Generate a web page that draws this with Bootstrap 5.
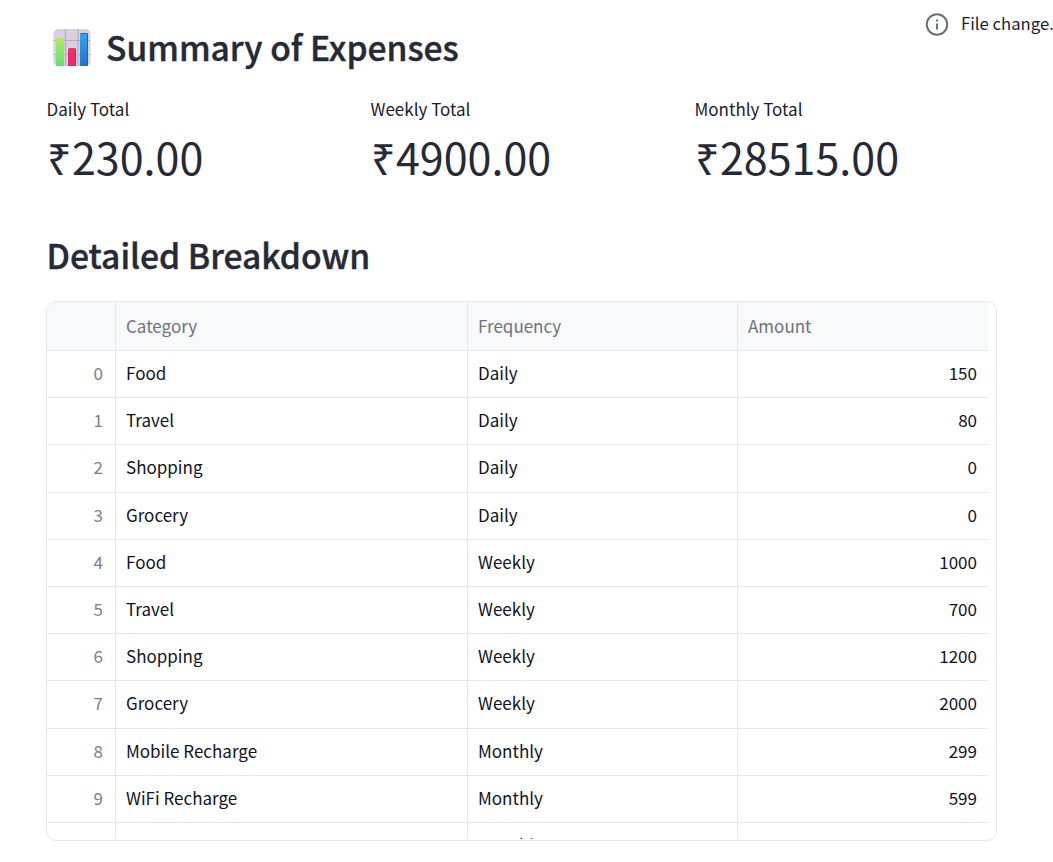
<!DOCTYPE html>
<html lang="en"><head><meta charset="utf-8"><title>Summary of Expenses</title>
<meta name="viewport" content="width=device-width, initial-scale=1">
<link href="https://cdn.jsdelivr.net/npm/bootstrap@5.3.0/dist/css/bootstrap.min.css" rel="stylesheet">
<style>
html,body{height:862px;overflow:hidden}
body{font-family:"Noto Sans CJK SC",sans-serif;color:#1a1c2e;font-size:17px;line-height:24px;background:#fff}
.page{padding:0 0 0 46px;height:862px}
.status{top:0;right:0;width:128px;height:47px;white-space:nowrap}
.status span{margin:-1px 0 0 12px;font-size:16.7px}
.title{padding:24px 0 0 6px;height:97px}
.title h1,.sect{font-size:33.6px;line-height:46px;font-weight:500;margin:0;color:#262a38;-webkit-text-stroke:.4px #262a38}
.title svg{margin:4px 14px 0 0}
.sect{margin:50px 0 23px .5px}
.metrics{height:85px;padding-left:.5px}
.metric-col{width:324px;flex:none}
.metric-num{font-size:43px;line-height:58px;margin:6px 0 0 .5px;color:#262a38}
.frame{border:1px solid #e6e7ea;border-radius:10px;height:540px;width:951px;overflow:hidden}
.clip{height:537px;overflow:hidden}
.sheet{display:block;width:941px}
.sheet thead,.sheet tbody{display:block}
.sheet tr{display:flex;height:47.2px}
.sheet thead tr{height:49px}
.sheet th,.sheet td{padding:0 10px;border:0 solid #e6e7ea;border-width:0 1px 1px 0;white-space:nowrap;display:flex;align-items:center}
.sheet th{background:#f8f9fb;color:#6f727d;font-weight:400}
.sheet td{color:#11131f;padding-bottom:2px}
.sheet tr>:nth-child(1){width:69px;color:#7c7f8a;justify-content:flex-end;padding-right:12px}
.sheet tr>:nth-child(2){width:352px}
.sheet tr>:nth-child(3){width:270px}
.sheet tr>:nth-child(4){width:250px;border-right-width:0}
.sheet td:nth-child(4){justify-content:flex-end;padding-right:11px}
</style></head><body>
<main class="page position-relative">
<div class="status position-absolute d-flex align-items-center"><svg class="flex-shrink-0" width="24" height="24" viewBox="0 0 24 24" fill="none" stroke="#6c6f7c" stroke-width="2"><circle cx="12" cy="12.5" r="10.2"/><path d="M12 11.5v6M12 7.5v2"/></svg><span>File change.</span></div>
<div class="title d-flex align-items-start">
<svg class="flex-shrink-0" width="40" height="40" viewBox="0 0 40 40">
<defs><linearGradient id="g" x2="0" y2="1"><stop stop-color="#b5ea5e"/><stop offset="1" stop-color="#62df7c"/></linearGradient><linearGradient id="r" x2="0" y2="1"><stop stop-color="#e03a62"/><stop offset="1" stop-color="#f0247c"/></linearGradient><linearGradient id="b" x2="0" y2="1"><stop stop-color="#38a4f0"/><stop offset="1" stop-color="#2272c8"/></linearGradient></defs>
<rect x="1.5" y="1" width="37" height="37" rx="5" fill="#d8d1df"/>
<path d="M13.5 1v37M26 1v37M1.5 12.5h37M1.5 26.5h37" stroke="#b5afbd" stroke-width="1.2"/>
<path d="M4 38V11.5q0-1.5 1.5-1.5h5q1.5 0 1.5 1.5V38z" fill="url(#g)"/>
<path d="M16 38V21.5q0-1.5 1.5-1.5h5q1.5 0 1.5 1.5V38z" fill="url(#r)"/>
<path d="M28 38V6.5q0-1.5 1.5-1.5h5q1.5 0 1.5 1.5V38z" fill="url(#b)"/>
<path d="M28.5 5.5h7" stroke="#1766a8"/><path d="M35.5 6v32" stroke="#1b65b5"/><path d="M23.5 21v17" stroke="#c82258"/>
</svg><h1>Summary of Expenses</h1></div>
<div class="metrics d-flex">
<div class="metric-col"><div>Daily Total</div><div class="metric-num">₹230.00</div></div>
<div class="metric-col"><div>Weekly Total</div><div class="metric-num">₹4900.00</div></div>
<div class="metric-col"><div>Monthly Total</div><div class="metric-num">₹28515.00</div></div></div>
<h2 class="sect">Detailed Breakdown</h2>
<div class="frame"><div class="clip"><table class="sheet">
<thead><tr><th></th><th>Category</th><th>Frequency</th><th>Amount</th></tr></thead><tbody>
<tr><td>0</td><td>Food</td><td>Daily</td><td>150</td></tr>
<tr><td>1</td><td>Travel</td><td>Daily</td><td>80</td></tr>
<tr><td>2</td><td>Shopping</td><td>Daily</td><td>0</td></tr>
<tr><td>3</td><td>Grocery</td><td>Daily</td><td>0</td></tr>
<tr><td>4</td><td>Food</td><td>Weekly</td><td>1000</td></tr>
<tr><td>5</td><td>Travel</td><td>Weekly</td><td>700</td></tr>
<tr><td>6</td><td>Shopping</td><td>Weekly</td><td>1200</td></tr>
<tr><td>7</td><td>Grocery</td><td>Weekly</td><td>2000</td></tr>
<tr><td>8</td><td>Mobile Recharge</td><td>Monthly</td><td>299</td></tr>
<tr><td>9</td><td>WiFi Recharge</td><td>Monthly</td><td>599</td></tr>
<tr><td></td><td></td><td>Monthly</td><td></td></tr>
</tbody></table></div></div>
</main>
<script src="https://cdn.jsdelivr.net/npm/bootstrap@5.3.0/dist/js/bootstrap.bundle.min.js"></script>
</body></html>
